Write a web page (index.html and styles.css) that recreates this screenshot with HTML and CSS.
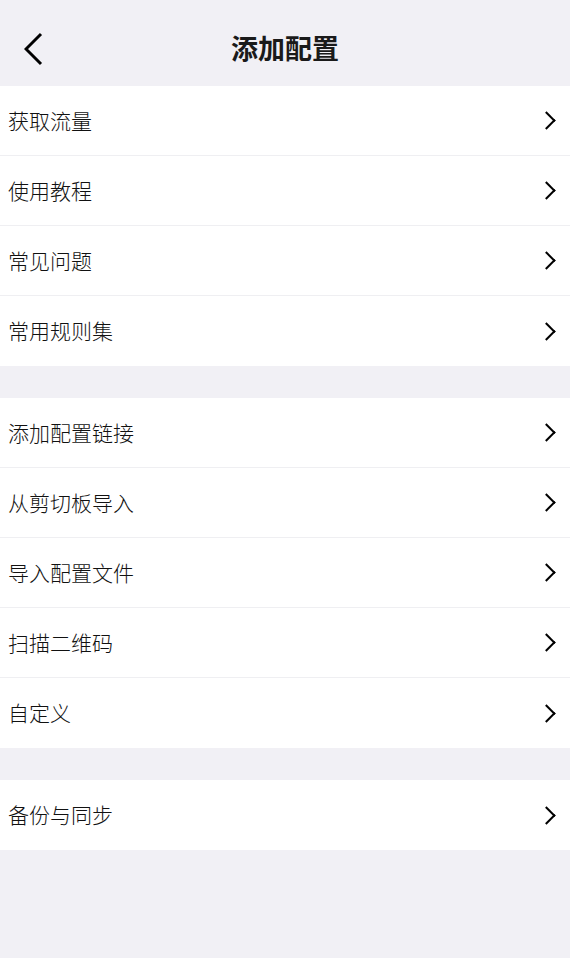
FILE: index.html
```html
<!DOCTYPE html>
<html lang="zh-CN">
<head>
    <meta charset="UTF-8">
    <meta name="viewport" content="width=device-width, initial-scale=1.0">
    <title>添加配置</title>
    <link rel="stylesheet" href="styles.css">
</head>
<body>
    <!-- Top bar -->
    <header class="top-bar">
        <button class="back-button" aria-label="返回">
            <svg width="22" height="34" viewBox="0 0 22 34">
                <polyline points="17,2 2,17 17,32" fill="none" stroke="#000" stroke-width="3"/>
            </svg>
        </button>
        <h1>添加配置</h1>
    </header>

    <ul class="menu-group">
        <li class="menu-item"><span>获取流量</span><i class="arrow"></i></li>
        <li class="menu-item"><span>使用教程</span><i class="arrow"></i></li>
        <li class="menu-item"><span>常见问题</span><i class="arrow"></i></li>
        <li class="menu-item"><span>常用规则集</span><i class="arrow"></i></li>
    </ul>

    <ul class="menu-group">
        <li class="menu-item"><span>添加配置链接</span><i class="arrow"></i></li>
        <li class="menu-item"><span>从剪切板导入</span><i class="arrow"></i></li>
        <li class="menu-item"><span>导入配置文件</span><i class="arrow"></i></li>
        <li class="menu-item"><span>扫描二维码</span><i class="arrow"></i></li>
        <li class="menu-item"><span>自定义</span><i class="arrow"></i></li>
    </ul>

    <ul class="menu-group">
        <li class="menu-item"><span>备份与同步</span><i class="arrow"></i></li>
    </ul>
</body>
</html>
```

FILE: styles.css
```css
body {
    margin: 0;
    min-height: 958px;
    background-color: #f1f0f5;
    font-family: "Noto Sans CJK SC", "Noto Sans", sans-serif;
    color: #111;
}

.top-bar {
    height: 86px;
    position: relative;
    display: flex;
    align-items: center;
    justify-content: center;
}

.top-bar h1 {
    margin: 0;
    font-size: 27px;
    font-weight: bold;
    color: #1a1a1a;
    padding-top: 9px;
}

.back-button {
    position: absolute;
    left: 24px;
    top: 32px;
    padding: 0;
    border: none;
    background: none;
    cursor: pointer;
    line-height: 0;
}

.menu-group {
    list-style: none;
    margin: 0 0 32px;
    padding: 0;
    background-color: white;
}

.menu-item {
    height: 69px;
    padding: 0 14px 0 8px;
    display: flex;
    align-items: center;
    justify-content: space-between;
    font-size: 21px;
    font-weight: 300;
    border-bottom: 1px solid #efeff2;
}

.menu-item span {
    padding-bottom: 2px;
}

.menu-item:last-child {
    height: 70px;
    border-bottom: none;
}

.menu-item .arrow {
    width: 11px;
    height: 11px;
    border-top: 2px solid #000;
    border-right: 2px solid #000;
    transform: rotate(45deg);
    margin-right: 3px;
}
```
